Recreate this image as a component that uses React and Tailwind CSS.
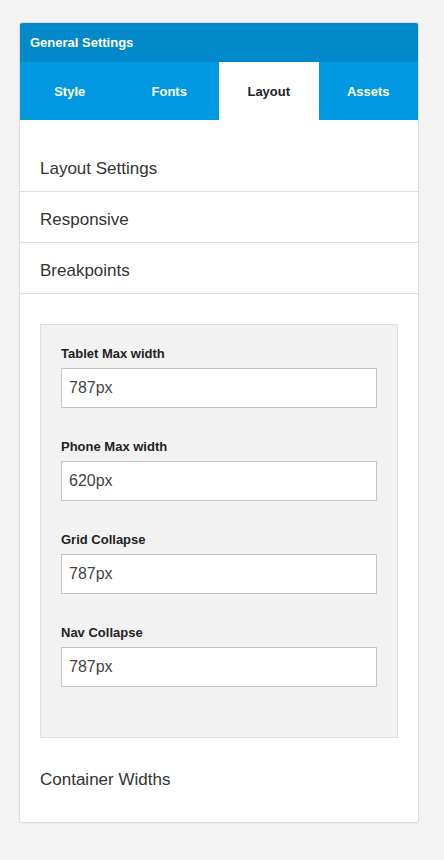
const tabs = ['Style', 'Fonts', 'Layout', 'Assets']

const fields = [
  { label: 'Tablet Max width', value: '787px' },
  { label: 'Phone Max width', value: '620px' },
  { label: 'Grid Collapse', value: '787px' },
  { label: 'Nav Collapse', value: '787px' },
]

const Row = ({ children, border = true, className = 'pt-[6px]' }) => (
  <div
    className={`h-[51px] flex items-center px-5 text-[17px] text-[#333] ${className} ${border ? 'border-b border-[#e0e0e0]' : ''}`}
  >
    {children}
  </div>
)

export default function App() {
  return (
    <div
      className="min-h-screen bg-[#f3f3f3] pt-[23px] px-5"
      style={{ fontFamily: '"Liberation Sans", Arial, sans-serif' }}
    >
      <div className="w-[398px] bg-white rounded-[2px] shadow-[0_0_0_1px_#dcdcdc,0_1px_3px_rgba(0,0,0,0.08)] overflow-hidden">
        <div className="h-[39px] bg-[#0289c9] flex items-center px-[10px] text-white font-bold text-[13px]">
          General Settings
        </div>
        <div className="flex h-[58px] bg-[#0099e1]">
          {tabs.map((t) => (
            <div
              key={t}
              className={`flex-1 flex items-center justify-center pt-[2px] font-bold text-[13px] ${
                t === 'Layout' ? 'bg-white text-[#222]' : 'text-white'
              }`}
            >
              {t}
            </div>
          ))}
        </div>

        <div className="pt-[21px] pb-[18px]">
          <Row>Layout Settings</Row>
          <Row>Responsive</Row>
          <Row>Breakpoints</Row>

          <div className="mx-5 mt-[30px] bg-[#f2f2f2] border border-[#dddddd] px-5 pt-5 pb-5">
            {fields.map((f) => (
              <div key={f.label} className="mb-[30px]">
                <div className="h-4 pt-[2px] leading-[14px] text-[13px] font-bold text-[#222]">{f.label}</div>
                <input
                  readOnly
                  value={f.value}
                  className="mt-[7px] w-full h-10 bg-white border border-[#c4c4c4] px-[7px] text-[16px] text-[#444] outline-none"
                  style={{ fontFamily: '"Liberation Sans", Arial, sans-serif' }}
                />
              </div>
            ))}
          </div>

          <div className="mt-[15px]">
            <Row border={false} className="pt-[2px]">Container Widths</Row>
          </div>
        </div>
      </div>
    </div>
  )
}
